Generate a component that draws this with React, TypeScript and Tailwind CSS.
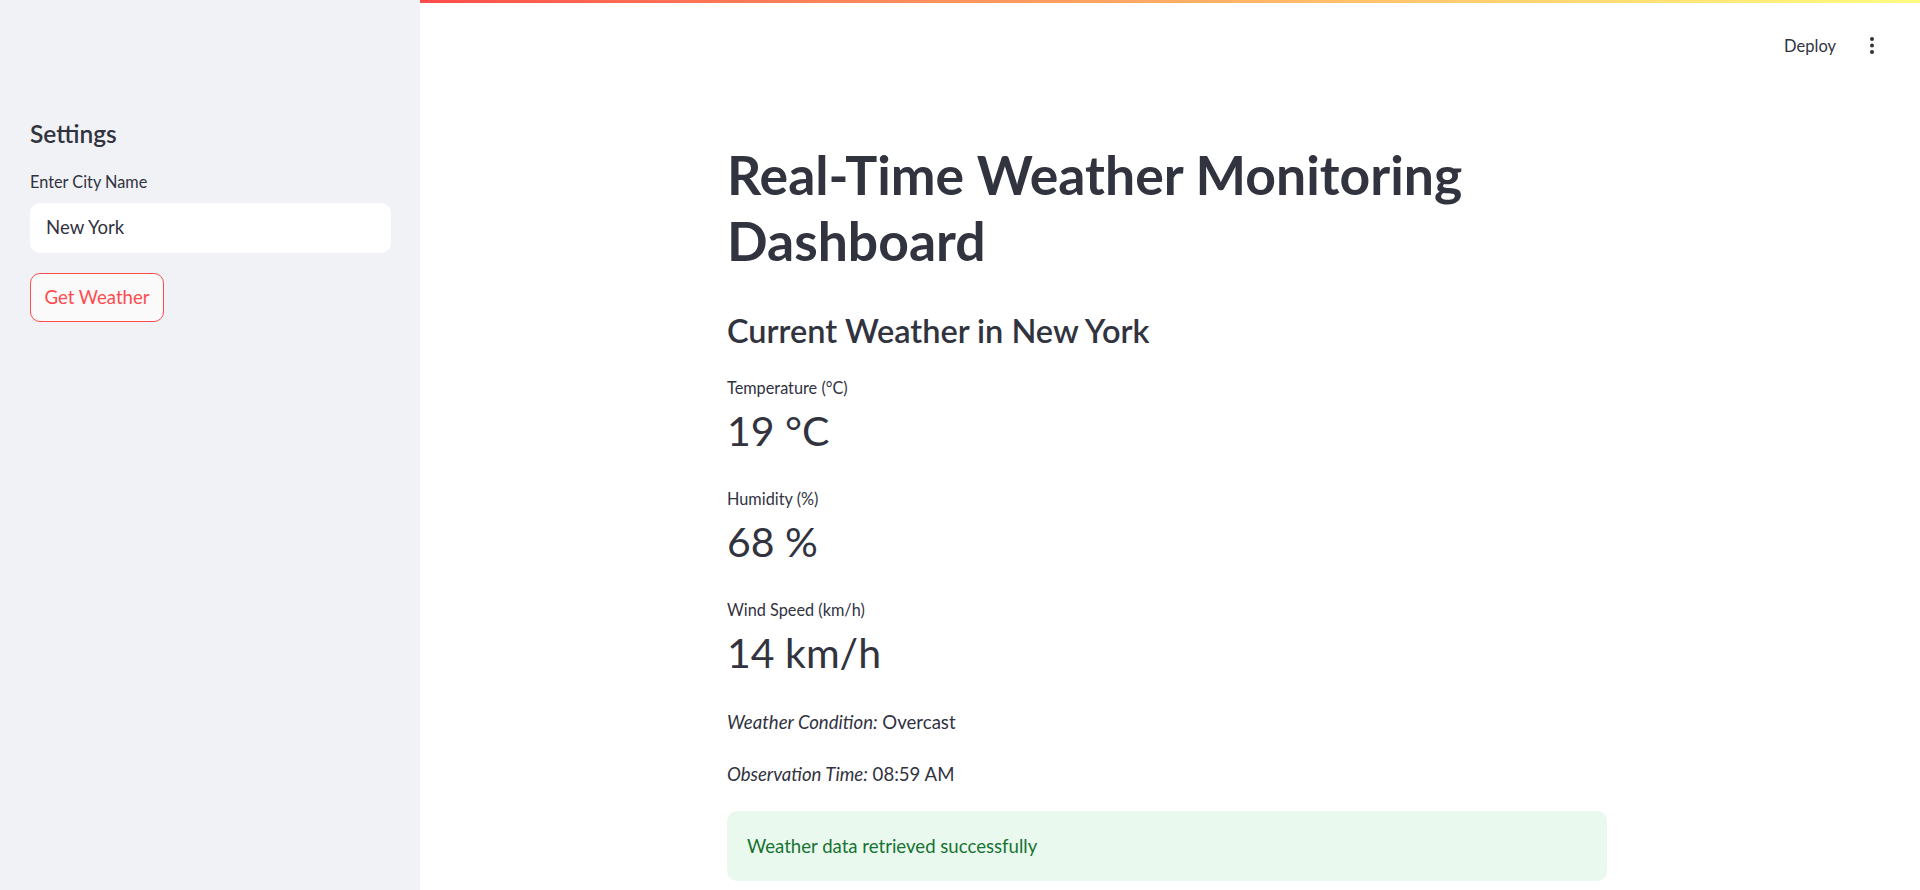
import React from 'react';

const font = { fontFamily: 'Lato, "Noto Sans", sans-serif' };

const Metric: React.FC<{ label: string; value: string; first?: boolean }> = ({ label, value, first }) => (
    <div className={first ? 'mt-[25px]' : 'mt-[30px]'}>
        <div className="text-[16.3px] leading-[22px]">{label}</div>
        <div className="mt-[5px] h-[54px] text-[41px] leading-[54px]">{value}</div>
    </div>
);

const App: React.FC = () => {
    return (
        <div className="flex h-[890px] w-full overflow-hidden bg-white text-[#31333f]" style={font}>
            <aside className="w-[420px] shrink-0 bg-[#f0f2f6] px-[30px] pt-[119px]">
                <h2 className="text-[24.5px] leading-[30px] font-semibold">Settings</h2>
                <label className="mt-[22px] block text-[16.3px] leading-[22px]">Enter City Name</label>
                <div className="mt-[10px] flex h-[50px] w-[361px] items-center rounded-[10px] bg-white px-[16px] text-[18.6px]">
                    New York
                </div>
                <button className="mt-[20px] flex h-[49px] w-[134px] items-center justify-center rounded-[10px] border border-[#ff4b4b] bg-[#fafafb] pt-[1px] text-[18.6px] text-[#ff4b4b]">
                    Get Weather
                </button>
            </aside>

            <main className="flex-1 min-w-0">
                <div className="h-[3px] bg-gradient-to-r from-[#ff4b4b] to-[#fffd80]" />
                <header className="flex items-center justify-end pt-[32px] pr-[46px]">
                    <span className="text-[16.5px] leading-[22px]">Deploy</span>
                    <svg className="ml-[34px]" width="4" height="18" viewBox="0 0 4 18">
                        <circle cx="2" cy="2" r="2" fill="#31333f" />
                        <circle cx="2" cy="8.5" r="2" fill="#31333f" />
                        <circle cx="2" cy="15" r="2" fill="#31333f" />
                    </svg>
                </header>

                <section className="ml-[307px] w-[880px]">
                    <h1 className="mt-[84px] text-[53.5px] leading-[66px] font-bold">
                        Real-Time Weather Monitoring
                        <br />
                        Dashboard
                    </h1>
                    <h3 className="mt-[37px] text-[32.5px] leading-[42px] font-semibold">Current Weather in New York</h3>

                    <Metric first label="Temperature (°C)" value="19 °C" />
                    <Metric label="Humidity (%)" value="68 %" />
                    <Metric label="Wind Speed (km/h)" value="14 km/h" />

                    <p className="mt-[29px] text-[18.6px] leading-[26px]">
                        <em>Weather Condition:</em> Overcast
                    </p>
                    <p className="mt-[26px] text-[18.6px] leading-[26px]">
                        <em>Observation Time:</em> 08:59 AM
                    </p>

                    <div className="mt-[24px] rounded-[10px] bg-[#e9f9ee] px-[20px] py-[22px] text-[18.6px] leading-[26px] text-[#177233]">
                        Weather data retrieved successfully
                    </div>
                </section>
            </main>
        </div>
    );
};

export default App;
